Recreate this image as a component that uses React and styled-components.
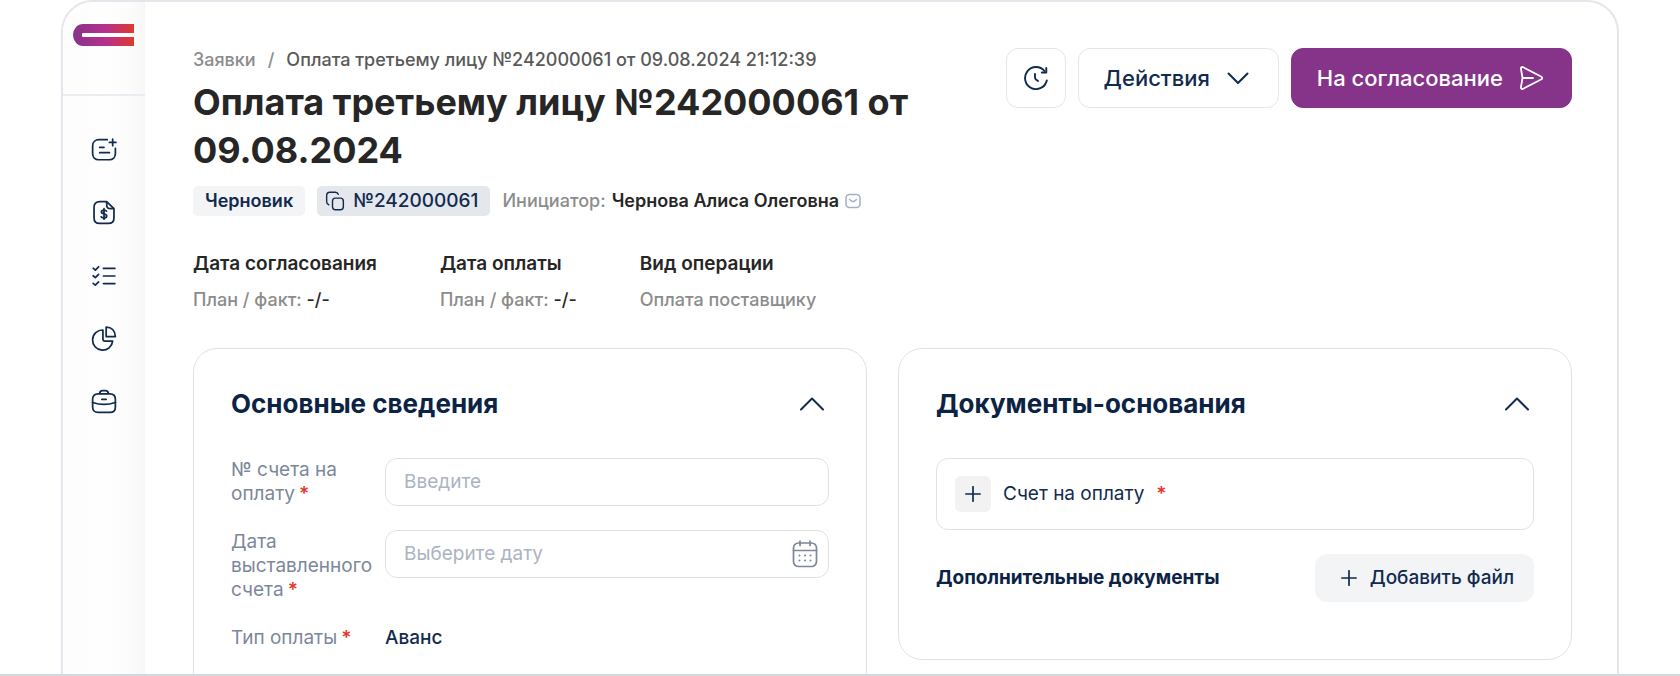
import React from "react";
import styled, { createGlobalStyle } from "styled-components";

const GlobalStyle = createGlobalStyle`
  * {
    box-sizing: border-box;
  }
  body {
    margin: 0;
    background: #fff;
    font-family: Inter, "Liberation Sans", sans-serif;
    font-size: 19px;
    line-height: 24px;
    color: #262626;
  }
  h1, h2, h3, p, dl, dd, ol {
    margin: 0;
    padding: 0;
  }
  button, input {
    font: inherit;
    color: inherit;
  }
  button {
    cursor: pointer;
  }
  svg {
    display: block;
    flex: none;
  }
`;

const Page = styled.div`
  height: 100vh;
  padding: 0 61px;
  overflow: hidden;
  border-bottom: 2px solid #d3d6db;
`;

const Window = styled.div`
  display: flex;
  min-height: 120vh;
  border: 2px solid #e3e6ea;
  border-radius: 32px;
  overflow: hidden;
`;

const Sidebar = styled.aside`
  flex: none;
  width: 82px;
  background: linear-gradient(90deg, #fdfdfd 0%, #fefefe 50%, #fcfcfc 80%, #f7f7f7 100%);
`;

const LogoLink = styled.a`
  display: block;
  height: 94px;
  padding: 22px 10px;
  border-bottom: 2px solid #e9edf1;
`;

const Nav = styled.nav`
  display: flex;
  flex-direction: column;
  align-items: center;
  gap: 37px;
  padding-top: 41px;
`;

const NavLink = styled.a`
  color: #112a4e;
`;

const Main = styled.main`
  flex: 1;
  min-width: 0;
  padding: 46px 45px 0 48px;
`;

const Header = styled.header`
  display: flex;
  justify-content: space-between;
  align-items: flex-start;
`;

const HeaderInfo = styled.div`
  flex: 0 1 740px;
`;

const Breadcrumbs = styled.ol`
  display: flex;
  gap: 12px;
  list-style: none;
  font-size: 18px;
  font-weight: 500;
  color: #595959;
  a {
    color: #8c8c8c;
    text-decoration: none;
  }
  li + li::before {
    content: "/";
    margin-right: 12px;
    color: #8c8c8c;
  }
`;

const Title = styled.h1`
  margin-top: 6px;
  font-size: 36px;
  line-height: 48px;
  font-weight: 700;
`;

const Meta = styled.div`
  display: flex;
  align-items: center;
  gap: 12px;
  margin-top: 12px;
  font-size: 18px;
  white-space: nowrap;
`;

const Tag = styled.span`
  height: 30px;
  padding: 0 12px;
  border-radius: 5px;
  background: #f2f4f6;
  color: #112a4e;
  font-weight: 600;
  line-height: 30px;
`;

const CopyTag = styled.button`
  display: flex;
  align-items: center;
  gap: 8px;
  height: 30px;
  padding: 0 12px 0 8px;
  border: 0;
  border-radius: 5px;
  background: #e4e8ec;
  color: #112a4e;
  font-size: 19px;
  font-weight: 500;
`;

const Initiator = styled.p`
  display: flex;
  align-items: center;
  gap: 6px;
  color: #8c8c8c;
  font-weight: 500;
  strong {
    color: #262626;
    font-weight: 600;
  }
`;

const MailLink = styled.a`
  color: #a3afc2;
`;

const Actions = styled.div`
  display: flex;
  gap: 12px;
`;

const Button = styled.button`
  display: flex;
  align-items: center;
  justify-content: center;
  gap: 16px;
  height: 60px;
  padding: ${(p) => (p.$square ? "0 17px" : "0 28px 0 25px")};
  border: 1px solid ${(p) => (p.$primary ? "#86338a" : "#e3e5e8")};
  border-radius: 12px;
  background: ${(p) => (p.$primary ? "#86338a" : "#fff")};
  color: ${(p) => (p.$primary ? "#fff" : "#112a4e")};
  font-size: 22px;
  font-weight: 500;
  white-space: nowrap;
`;

const Facts = styled.dl`
  display: flex;
  gap: 63px;
  margin-top: 36px;
`;

const Fact = styled.div`
  dt {
    font-weight: 600;
  }
  dd {
    margin-top: 12px;
    font-size: 18px;
    font-weight: 500;
    color: #8c8c8c;
  }
  b {
    color: #262626;
    font-weight: 500;
  }
`;

const Cards = styled.div`
  display: grid;
  grid-template-columns: 1fr 1fr;
  align-items: start;
  gap: 31px;
  margin-top: 36px;
`;

const Card = styled.section`
  min-height: ${(p) => p.$minHeight || "0"};
  padding: 37px 37px 57px;
  border: 1px solid #dfe2e5;
  border-radius: 24px;
`;

const CardHeader = styled.div`
  display: flex;
  justify-content: space-between;
  align-items: center;
  height: 36px;
  margin-bottom: 36px;
  h2 {
    font-size: 26px;
    font-weight: 700;
    color: #0b2344;
  }
`;

const Collapse = styled.button`
  padding: 0 5px;
  border: 0;
  background: none;
  color: #112a4e;
`;

const Form = styled.div`
  display: flex;
  flex-direction: column;
  gap: 24px;
`;

const Field = styled.div`
  display: grid;
  grid-template-columns: 144px 1fr;
  column-gap: 10px;
  align-items: start;
`;

const Label = styled.label`
  color: #7c879b;
  &::after {
    content: "*";
    margin-left: 4px;
    color: #e2372b;
    font-weight: 600;
  }
`;

const Required = styled.span`
  color: #e2372b;
  font-weight: 600;
`;

const InputBox = styled.div`
  display: flex;
  align-items: center;
  height: 48px;
  padding: 0 9px 0 18px;
  border: 1px solid #dfe2e5;
  border-radius: 12px;
  color: #7c879b;
  input {
    flex: 1;
    min-width: 0;
    padding: 0;
    border: 0;
    outline: 0;
    background: none;
    color: #112a4e;
  }
  input::placeholder {
    color: #acb3c1;
    opacity: 1;
  }
`;

const Output = styled.output`
  color: #112a4e;
  font-weight: 500;
`;

const DocItem = styled.div`
  display: flex;
  align-items: center;
  gap: 12px;
  height: 72px;
  padding: 0 18px;
  border: 1px solid #dfe2e5;
  border-radius: 12px;
  color: #112a4e;
`;

const AddSquare = styled.button`
  display: flex;
  align-items: center;
  justify-content: center;
  width: 36px;
  height: 36px;
  padding: 0;
  border: 0;
  border-radius: 6px;
  background: #f2f2f2;
`;

const ExtraDocs = styled.div`
  display: flex;
  align-items: center;
  justify-content: space-between;
  margin-top: 24px;
  h3 {
    font-size: 19px;
    font-weight: 700;
    color: #0b2344;
  }
`;

const AddFile = styled.button`
  display: flex;
  align-items: center;
  gap: 13px;
  height: 48px;
  padding: 0 20px 0 26px;
  border: 0;
  border-radius: 12px;
  background: #f2f4f6;
  color: #112a4e;
  font-weight: 500;
`;

const Icon = ({ size = 26, width = 1.6, box = 24, children }) => (
  <svg
    width={size}
    height={size}
    viewBox={`0 0 ${box} ${box}`}
    fill="none"
    stroke="currentColor"
    strokeWidth={width}
    strokeLinecap="round"
    strokeLinejoin="round"
    aria-hidden="true"
  >
    {children}
  </svg>
);

const Logo = () => (
  <svg width="61" height="22" viewBox="0 0 61 22" aria-hidden="true">
    <defs>
      <linearGradient id="logo" x1="0" x2="1" y1="0" y2="0">
        <stop offset="0" stopColor="#86338a" />
        <stop offset="0.55" stopColor="#b6318c" />
        <stop offset="1" stopColor="#e0392c" />
      </linearGradient>
    </defs>
    <path
      fill="url(#logo)"
      d="M10 0H61V9H10a1 1 0 0 0-1 1V12A1 1 0 0 0 10 13H61V22H10A10 11 0 0 1 10 0Z"
    />
  </svg>
);

const PlusIcon = () => (
  <Icon size={16} box={16} width={1.7}>
    <path d="M8 0.800v14.400M0.800 8h14.400" />
  </Icon>
);

const ChevronIcon = ({ up }) => (
  <Icon size={24} width={2}>
    <path d={up ? "M1 17.500 12 6.500 23 17.500" : "M2.500 7.500 12 17l9.500-9.500"} />
  </Icon>
);

const navItems = [
  {
    label: "Заявки",
    icon: (
      <path d="M15 2.500H7.500C4 2.500 1.500 4.700 1.500 8v7.500c0 3.300 2.300 5.500 5.500 5.500h10c3.200 0 5.500-2.200 5.500-5.500V10.500M8 9.500h4M8 14.500h9M20 2v6M17 5h6" />
    ),
  },
  {
    label: "Счета",
    icon: (
      <>
        <path d="M14.500 1.500H8C4.700 1.500 2.800 3.300 2.800 6.500v10c0 3.200 1.900 5 5.200 5h8c3.300 0 5.200-1.800 5.200-5V8M14.500 1.500V4.500c0 2.300 1.300 3.500 3.500 3.500h3.200M14.500 1.500 21.200 8" />
        <path d="M14.300 10.300c-.4-.7-1.200-1-2.300-1-1.400 0-2.400.6-2.400 1.700 0 2.500 4.900 1.100 4.900 3.800 0 1.100-1 1.800-2.500 1.800-1.200 0-2.100-.4-2.600-1.200M12 8v9.700" />
      </>
    ),
  },
  {
    label: "Задачи",
    icon: (
      <path d="M11.500 5h10.500M11.500 12h10.500M11.500 19h10.500M2 4.800l2 1.700L7 3.500M2 11.800l2 1.700 3-3M2 18.800l2 1.700 3-3" />
    ),
  },
  {
    label: "Отчеты",
    icon: (
      <>
        <path d="M11 3.700A9.300 9.300 0 1 0 20 14h-7c-1.500 0-2-.5-2-2Z" />
        <path d="M14 1v8.800h8.500C22.300 4.500 19 1 14 1Z" />
      </>
    ),
  },
  {
    label: "Портфель",
    icon: (
      <>
        <path d="M6.500 4.500h11c3.300 0 5 2 5 5v7c0 3-2 5-5 5h-11c-3 0-5-2-5-5v-7c0-3 1.700-5 5-5ZM8 4.500c0-2 1-3 2.800-3h2.400c1.800 0 2.800 1 2.800 3M10 9.500h4" />
        <path d="M1.500 12.500c6.500 2.200 14.500 2.200 21 0" />
      </>
    ),
  },
];

const App = () => {
  return (
    <>
      <GlobalStyle />
      <Page>
        <Window>
          <Sidebar>
            <LogoLink href="#" aria-label="Главная">
              <Logo />
            </LogoLink>
            <Nav>
              {navItems.map((item) => (
                <NavLink href="#" key={item.label} aria-label={item.label}>
                  <Icon>{item.icon}</Icon>
                </NavLink>
              ))}
            </Nav>
          </Sidebar>
          <Main>
            <Header>
              <HeaderInfo>
                <Breadcrumbs>
                  <li>
                    <a href="#">Заявки</a>
                  </li>
                  <li>Оплата третьему лицу №242000061 от 09.08.2024 21:12:39</li>
                </Breadcrumbs>
                <Title>Оплата третьему лицу №242000061 от 09.08.2024</Title>
                <Meta>
                  <Tag>Черновик</Tag>
                  <CopyTag type="button">
                    <Icon size={20} width={1.7}>
                      <rect x="9" y="8.500" width="13" height="14" rx="3.500" />
                      <path d="M4.500 16.500C2.800 16 2 15 2 13V5.500C2 3 3.500 1.500 6 1.500h6.500c2 0 3 .8 3.500 2.500" />
                    </Icon>
                    №242000061
                  </CopyTag>
                  <Initiator>
                    Инициатор: <strong>Чернова Алиса Олеговна</strong>
                    <MailLink href="#" aria-label="Написать">
                      <Icon size={16} box={16} width={1.5}>
                        <rect x="1" y="1.500" width="14" height="13" rx="3.500" />
                        <path d="M4.500 6.500 7 8.300c.6.400 1.400.4 2 0l2.500-1.800" />
                      </Icon>
                    </MailLink>
                  </Initiator>
                </Meta>
              </HeaderInfo>
              <Actions>
                <Button type="button" $square aria-label="История">
                  <Icon size={24} width={1.9}>
                    <path d="M22.800 14.500A11 11 0 1 1 20.500 5M11 8v3.500c0 1 .3 1.500 1 2l2 1.500" />
                    <path d="M22.300 2v4.500h-4.500" />
                  </Icon>
                </Button>
                <Button type="button">
                  Действия
                  <ChevronIcon />
                </Button>
                <Button type="button" $primary>
                  На согласование
                  <Icon size={24} width={1.8}>
                    <path d="M2 3C1.700 1.300 2.800.5 4.300 1.300L22 10.500c1.600.9 1.600 2.100 0 3L4.300 22.700C2.800 23.500 1.700 22.700 2 21L3.500 12ZM3.500 12H14" />
                  </Icon>
                </Button>
              </Actions>
            </Header>
            <Facts>
              <Fact>
                <dt>Дата согласования</dt>
                <dd>
                  План / факт: <b>-/-</b>
                </dd>
              </Fact>
              <Fact>
                <dt>Дата оплаты</dt>
                <dd>
                  План / факт: <b>-/-</b>
                </dd>
              </Fact>
              <Fact>
                <dt>Вид операции</dt>
                <dd>Оплата поставщику</dd>
              </Fact>
            </Facts>
            <Cards>
              <Card $minHeight="480px">
                <CardHeader>
                  <h2>Основные сведения</h2>
                  <Collapse type="button" aria-label="Свернуть">
                    <ChevronIcon up />
                  </Collapse>
                </CardHeader>
                <Form>
                  <Field>
                    <Label htmlFor="invoice">№ счета на оплату</Label>
                    <InputBox>
                      <input id="invoice" type="text" placeholder="Введите" />
                    </InputBox>
                  </Field>
                  <Field>
                    <Label htmlFor="date">Дата выставленного счета</Label>
                    <InputBox>
                      <input id="date" type="text" placeholder="Выберите дату" />
                      <Icon size={28} box={28} width={1.7}>
                        <rect x="2.500" y="3" width="23" height="23.500" rx="5" />
                        <path d="M2.500 10.500h23M9 1v4.500M19 1v4.500" />
                        <path strokeWidth="2" d="M8.500 15.500h0M14 15.500h0M19.500 15.500h0M8.500 20.500h0M14 20.500h0M19.500 20.500h0" />
                      </Icon>
                    </InputBox>
                  </Field>
                  <Field>
                    <Label htmlFor="type">Тип оплаты</Label>
                    <Output id="type">Аванс</Output>
                  </Field>
                </Form>
              </Card>
              <Card>
                <CardHeader>
                  <h2>Документы-основания</h2>
                  <Collapse type="button" aria-label="Свернуть">
                    <ChevronIcon up />
                  </Collapse>
                </CardHeader>
                <DocItem>
                  <AddSquare type="button" aria-label="Добавить счет на оплату">
                    <PlusIcon />
                  </AddSquare>
                  <span>Счет на оплату</span>
                  <Required>*</Required>
                </DocItem>
                <ExtraDocs>
                  <h3>Дополнительные документы</h3>
                  <AddFile type="button">
                    <PlusIcon />
                    Добавить файл
                  </AddFile>
                </ExtraDocs>
              </Card>
            </Cards>
          </Main>
        </Window>
      </Page>
    </>
  );
};

export default App;
